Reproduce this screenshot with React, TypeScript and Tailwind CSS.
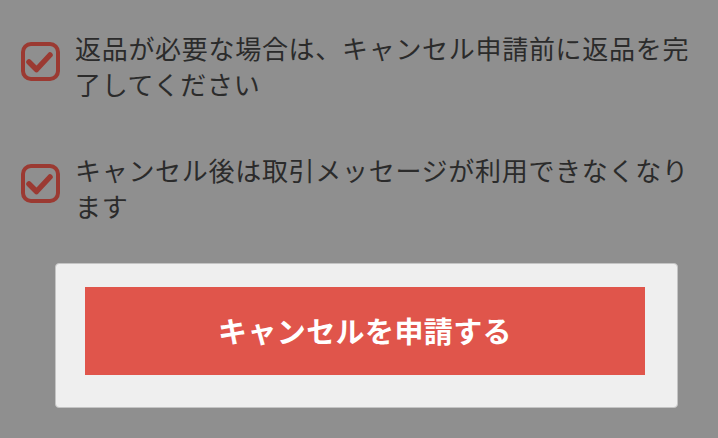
const items = [
  "返品が必要な場合は、キャンセル申請前に返品を完了してください",
  "キャンセル後は取引メッセージが利用できなくなります",
];

function CheckBox() {
  return (
    <svg width="39" height="39" viewBox="0 0 39 39" className="shrink-0 mt-[12px]">
      <rect x="2" y="2" width="35" height="35" rx="8" fill="none" stroke="#9b3a32" strokeWidth="4" />
      <path d="M8 20 L15.5 27.5 L29 13" fill="none" stroke="#9b3a32" strokeWidth="5.5" strokeLinecap="round" strokeLinejoin="round" />
    </svg>
  );
}

export default function App() {
  return (
    <div
      className="w-[718px] h-[438px] bg-[#8f8f8f] overflow-hidden pt-[30px]"
      style={{ fontFamily: '"Noto Sans CJK JP", "Noto Sans", sans-serif' }}
    >
      <div className="flex flex-col gap-[50px] pl-[21px] pr-[18px]">
        {items.map((text) => (
          <div key={text} className="flex items-start gap-[15px]">
            <CheckBox />
            <p className="text-[26px] leading-[36px] tracking-[0.7px] text-[#2b2b2b]">{text}</p>
          </div>
        ))}
      </div>

      {/* Submit panel */}
      <div className="ml-[55px] mt-[39px] w-[623px] h-[145px] bg-[#efefef] border border-[#c4c4c4] rounded-[4px] pt-[23px] pl-[29px]">
        <button className="w-[560px] h-[88px] bg-[#e0554b] text-white text-[29px] font-bold tracking-[0.4px] flex items-center justify-center">
          キャンセルを申請する
        </button>
      </div>
    </div>
  );
}
